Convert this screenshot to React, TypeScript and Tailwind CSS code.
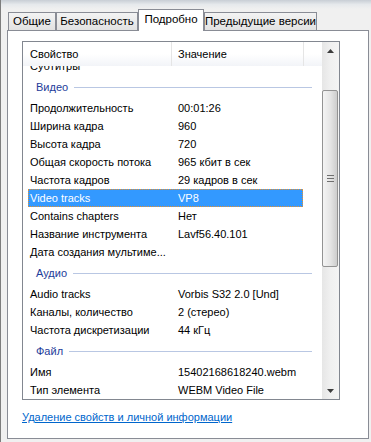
import React from "react";

type Row = { name: string; value?: string; selected?: boolean };
type Group = { title: string; rows: Row[] };

const groups: Group[] = [
  {
    title: "Видео",
    rows: [
      { name: "Продолжительность", value: "00:01:26" },
      { name: "Ширина кадра", value: "960" },
      { name: "Высота кадра", value: "720" },
      { name: "Общая скорость потока", value: "965 кбит в сек" },
      { name: "Частота кадров", value: "29 кадров в сек" },
      { name: "Video tracks", value: "VP8", selected: true },
      { name: "Contains chapters", value: "Нет" },
      { name: "Название инструмента", value: "Lavf56.40.101" },
      { name: "Дата создания мультиме..." },
    ],
  },
  {
    title: "Аудио",
    rows: [
      { name: "Audio tracks", value: "Vorbis S32 2.0 [Und]" },
      { name: "Каналы, количество", value: "2 (стерео)" },
      { name: "Частота дискретизации", value: "44 кГц" },
    ],
  },
  {
    title: "Файл",
    rows: [
      { name: "Имя", value: "15402168618240.webm" },
      { name: "Тип элемента", value: "WEBM Video File" },
    ],
  },
];

function PropRow({ row }: { row: Row }) {
  if (row.selected) {
    return (
      <div className="flex h-[18px] w-[275px] items-center whitespace-nowrap border border-dotted border-[#e8912f] bg-[#3399ff] text-white">
        <div className="w-[142px] shrink-0 pl-[1px]">{row.name}</div>
        <div className="shrink-0 pl-[7px]">{row.value}</div>
      </div>
    );
  }
  return (
    <div className="flex h-[18px] w-[275px] items-center whitespace-nowrap">
      <div className="w-[143px] shrink-0 pl-[2px]">{row.name}</div>
      <div className="shrink-0 pl-[7px]">{row.value}</div>
    </div>
  );
}

function GroupHeader({ title }: { title: string }) {
  return (
    <div className="-ml-[5px] flex h-[24px] items-center pl-[13px] pt-[1px] pr-[10px]">
      <span className="text-[#1e3c9a]">{title}</span>
      <div className="ml-[6px] h-px flex-1 bg-[#b9c7e3]" />
    </div>
  );
}

function Tab({ label, w }: { label: string; w: string }) {
  return (
    <div
      className={`${w} flex h-[18px] items-center justify-center whitespace-nowrap border border-b-0 border-[#898c95] bg-gradient-to-b from-[#f3f3f3] to-[#e2e2e2]`}
    >
      {label}
    </div>
  );
}

function Arrow({ down }: { down?: boolean }) {
  return (
    <svg width="7" height="4" viewBox="0 0 7 4">
      <polygon points={down ? "0,0 7,0 3.5,4" : "0,4 7,4 3.5,0"} fill="#3c3c3c" />
    </svg>
  );
}

export default function App() {
  return (
    <div className="flex h-[442px] w-[371px] flex-col overflow-hidden border-l border-[#7d7d7d] bg-[#f0f0f0] font-['Liberation_Sans',Arial,sans-serif] text-[11px] text-black">
      <div className="h-[9px] bg-gradient-to-b from-[#c8ced5] via-[#e6e9ec] to-[#f0f0f0]" />

      <div className="relative z-10 flex h-[21px] items-end pl-[7px] text-[11.5px]">
        <Tab label="Общие" w="w-[48px]" />
        <Tab label="Безопасность" w="w-[82px]" />
        <div className="-mb-px flex h-[22px] w-[66px] justify-center whitespace-nowrap border border-b-0 border-[#898c95] bg-white pt-[2px] leading-[14px]">
          Подробно
        </div>
        <Tab label="Предыдущие версии" w="w-[113px]" />
      </div>

      <div className="ml-[6px] h-[409px] w-[362px] border border-[#898c95] bg-white pl-[14px] pt-[10px]">
        <div className="flex h-[359px] w-[318px] border border-[#828790]">
          <div className="flex w-[299px] flex-col">
            <div className="flex h-[24px] bg-gradient-to-b from-white via-white to-[#f2f4f8]">
              <div className="flex w-[149px] items-center border-r border-[#e5e5e5] pl-[7px]">Свойство</div>
              <div className="flex w-[132px] items-center border-r border-[#e5e5e5] pl-[6px]">Значение</div>
            </div>
            <div className="h-[333px] overflow-hidden">
              <div className="-mt-[9px] pl-[5px]">
                <PropRow row={{ name: "Субтитры" }} />
                {groups.map((g) => (
                  <div key={g.title}>
                    <GroupHeader title={g.title} />
                    {g.rows.map((r) => (
                      <PropRow key={r.name} row={r} />
                    ))}
                  </div>
                ))}
              </div>
            </div>
          </div>

          <div className="flex w-[17px] flex-col bg-gradient-to-r from-[#e6e6e6] via-[#f0f0f0] to-[#f4f4f4]">
            <div className="flex h-[17px] items-center justify-center">
              <Arrow />
            </div>
            <div className="h-[31px]" />
            <div className="mr-[1px] flex h-[177px] flex-col items-center justify-center gap-[2px] rounded-[2px] border border-[#939393] bg-gradient-to-r from-[#f4f4f4] via-[#e6e6e6] to-[#cdcdcd]">
              <div className="h-px w-[7px] bg-[#6f6f6f]" />
              <div className="h-px w-[7px] bg-[#6f6f6f]" />
              <div className="h-px w-[7px] bg-[#6f6f6f]" />
            </div>
            <div className="flex-1" />
            <div className="flex h-[17px] items-center justify-center">
              <Arrow down />
            </div>
          </div>
        </div>

        <div className="mt-[10px] leading-[15px]">
          <a className="text-[#0066cc] underline">Удаление свойств и личной информации</a>
        </div>
      </div>
    </div>
  );
}
